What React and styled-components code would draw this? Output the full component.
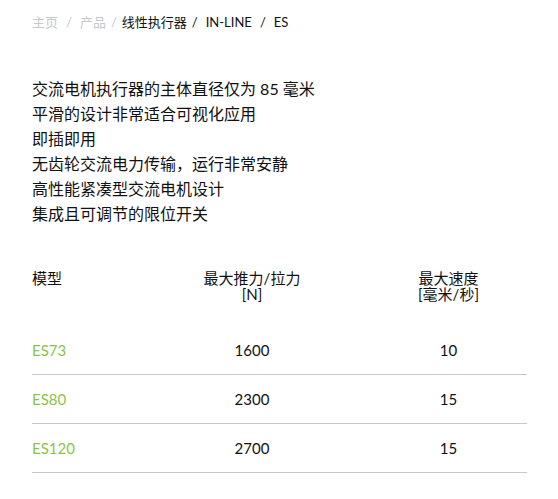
import React from "react";
import styled, { createGlobalStyle } from "styled-components";

const Global = createGlobalStyle`
  html, body { margin: 0; padding: 0; background: #fff; }
  body { font-family: "Lato", "Noto Sans CJK SC", sans-serif; color: #111; }
`;

const Page = styled.div`
  padding: 12px 31px 0 32px;
  width: 495px;
`;

const Crumbs = styled.nav`
  display: flex;
  align-items: center;
  gap: 5px;
  font-size: 13px;
  line-height: 20px;
  height: 20px;
`;

const Crumb = styled.span`
  color: ${(p) => (p.$muted ? "#c8c8c8" : "#111")};
`;

const Sep = styled.span`
  color: ${(p) => (p.$dark ? "#111" : "#c8c8c8")};
  margin: ${(p) => p.$m};
`;

const Features = styled.ul`
  list-style: none;
  margin: 44px 0 0;
  padding: 0;
  font-size: 16px;
  line-height: 25px;
`;

const Table = styled.div`
  margin-top: 42px;
`;

const Row = styled.div`
  display: grid;
  grid-template-columns: 124px 192px 1fr;
  align-items: start;
  font-size: 15px;
  ${(p) =>
    p.$head
      ? "line-height: 16px; padding: 2px 0 24px;"
      : "line-height: 20px; padding: 14px 0 14px; border-bottom: 1px solid #c8c8c8;"}
`;

const Cell = styled.div`
  text-align: ${(p) => (p.$first ? "left" : "center")};
  ${(p) => p.$last && "padding-left: 22px;"}
  color: ${(p) => (p.$green ? "#8cc34a" : "#111")};
`;

const crumbs = [
  { t: "主页", muted: true },
  { t: "产品", muted: true },
  { t: "线性执行器" },
  { t: "IN-LINE" },
  { t: "ES" },
];

const sepMargins = ["", "0 3px", "0", "0 3px 0 0", "0 3px"];

const features = [
  "交流电机执行器的主体直径仅为 85 毫米",
  "平滑的设计非常适合可视化应用",
  "即插即用",
  "无齿轮交流电力传输，运行非常安静",
  "高性能紧凑型交流电机设计",
  "集成且可调节的限位开关",
];

const rows = [
  ["ES73", "1600", "10"],
  ["ES80", "2300", "15"],
  ["ES120", "2700", "15"],
];

export default function App() {
  return (
    <>
      <Global />
      <Page>
        <Crumbs>
          {crumbs.map((c, i) => (
            <React.Fragment key={c.t}>
              {i > 0 && (
                <Sep $dark={i > 2} $m={sepMargins[i]}>
                  /
                </Sep>
              )}
              <Crumb $muted={c.muted}>{c.t}</Crumb>
            </React.Fragment>
          ))}
        </Crumbs>
        <Features>
          {features.map((f) => (
            <li key={f}>{f}</li>
          ))}
        </Features>
        <Table>
          <Row $head>
            <Cell $first>模型</Cell>
            <Cell>
              最大推力/拉力
              <br />
              [N]
            </Cell>
            <Cell $last>
              最大速度
              <br />
              [毫米/秒]
            </Cell>
          </Row>
          {rows.map((r) => (
            <Row key={r[0]}>
              <Cell $first $green>
                {r[0]}
              </Cell>
              <Cell>{r[1]}</Cell>
              <Cell $last>{r[2]}</Cell>
            </Row>
          ))}
        </Table>
      </Page>
    </>
  );
}
